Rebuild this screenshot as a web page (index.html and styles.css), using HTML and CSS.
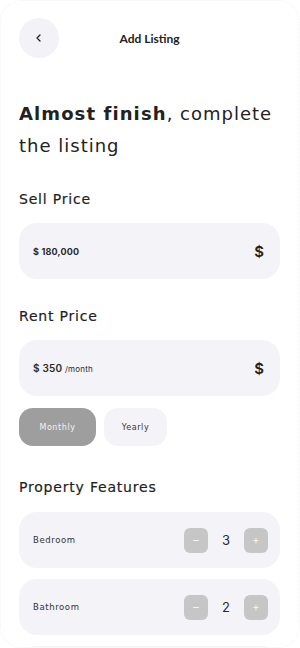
FILE: index.html
```html
<!DOCTYPE html>
<html lang="en">
<head>
<meta charset="utf-8">
<title>Add Listing</title>
<link rel="stylesheet" href="styles.css">
</head>
<body>
<div class="frame">
  <header class="topbar">
    <button class="back" aria-label="Back">
      <svg width="10" height="10" viewBox="0 0 10 10"><path d="M6 2 L3 5 L6 8" fill="none" stroke="#222" stroke-width="1.3" stroke-linecap="round" stroke-linejoin="round"/></svg>
    </button>
    <h1 class="title">Add Listing</h1>
    <span class="spacer"></span>
  </header>

  <h2 class="headline"><strong>Almost finish</strong>, complete the listing</h2>

  <h3 class="label label-first">Sell Price</h3>
  <div class="field">
    <span class="value">$ 180,000</span>
    <span class="cur">$</span>
  </div>

  <h3 class="label">Rent Price</h3>
  <div class="field">
    <span class="value value-rent">$ 350 <small>/month</small></span>
    <span class="cur">$</span>
  </div>

  <div class="toggles">
    <button class="pill pill-active">Monthly</button>
    <button class="pill">Yearly</button>
  </div>

  <h3 class="label label-features">Property Features</h3>
  <div class="rows">
    <div class="row">
      <span class="row-name">Bedroom</span>
      <div class="stepper">
        <span class="step">&minus;</span>
        <span class="count">3</span>
        <span class="step step-plus">+</span>
      </div>
    </div>
    <div class="row">
      <span class="row-name">Bathroom</span>
      <div class="stepper">
        <span class="step">&minus;</span>
        <span class="count">2</span>
        <span class="step step-plus">+</span>
      </div>
    </div>
    <div class="row row-next" aria-hidden="true"></div>
  </div>
</div>
</body>
</html>
```

FILE: styles.css
```css
* { box-sizing: border-box; }

html, body {
  margin: 0;
  padding: 0;
  background: #ffffff;
}

body {
  font-family: Inter, "Liberation Sans", sans-serif;
  color: #222222;
}

.frame {
  height: 648px;
  overflow: hidden;
  border: 1px dotted #f2f2f2;
  border-radius: 22px;
  padding: 17px 19px 0 18px;
}

.topbar {
  display: grid;
  grid-template-columns: 40px 1fr 40px;
  align-items: center;
  height: 40px;
}

.back {
  width: 40px;
  height: 40px;
  border: none;
  border-radius: 50%;
  background: #f3f2f7;
  display: flex;
  align-items: center;
  justify-content: center;
  padding: 0;
}

.back svg { display: block; }

.title {
  margin: 0;
  text-align: center;
  font-family: Lato, "Liberation Sans", sans-serif;
  font-weight: 700;
  font-size: 12px;
  color: #222;
}

.headline {
  margin: 40px 0 0;
  font-family: "DejaVu Sans", Inter, sans-serif;
  font-size: 18px;
  line-height: 32px;
  font-weight: 400;
  color: #222;
  letter-spacing: 1px;
}

.headline strong { font-weight: 700; letter-spacing: 1.1px; }

.label {
  margin: 27px 0 0;
  font-family: "DejaVu Sans", Inter, sans-serif;
  font-size: 14px;
  line-height: 20px;
  font-weight: 400;
  color: #1f1f1f;
  letter-spacing: 0.8px;
  -webkit-text-stroke: 0.2px #1f1f1f;
}

.label-features { margin-top: 31px; }

.field {
  margin-top: 14px;
  height: 56px;
  border-radius: 18px;
  background: #f4f3f8;
  display: flex;
  align-items: center;
  justify-content: space-between;
  padding: 0 16px 0 14px;
}

.value {
  font-size: 9px;
  font-weight: 700;
  color: #2a2a2a;
  letter-spacing: 0.2px;
}

.value-rent {
  font-size: 10px;
  font-weight: 600;
}

.value-rent small {
  font-size: 8px;
  font-weight: 400;
}

.cur {
  font-size: 15px;
  font-weight: 600;
  color: #222;
}

.toggles {
  margin-top: 12px;
  display: flex;
  gap: 8px;
}

.pill {
  height: 38px;
  border: none;
  border-radius: 14px;
  background: #f4f3f8;
  font-family: "DejaVu Sans", Inter, sans-serif;
  font-size: 8px;
  color: #333;
  width: 63px;
  padding: 0;
  letter-spacing: 0.6px;
}

.pill-active {
  width: 77px;
  background: #9e9e9e;
  color: #f2f2f2;
}

.rows {
  margin-top: 15px;
  display: flex;
  flex-direction: column;
  gap: 11px;
}

.row {
  height: 56px;
  border-radius: 18px;
  background: #f4f3f8;
  display: flex;
  align-items: center;
  justify-content: space-between;
  padding: 0 12px 0 14px;
  flex-shrink: 0;
}

.row-name {
  font-family: "DejaVu Sans", Inter, sans-serif;
  font-size: 8.5px;
  color: #333;
  letter-spacing: 0.6px;
}

.stepper {
  display: flex;
  align-items: center;
}

.step {
  width: 24px;
  height: 25px;
  border-radius: 6px;
  background: #c6c6c6;
  color: #f4f4f4;
  display: flex;
  align-items: center;
  justify-content: center;
  font-size: 12px;
  line-height: 1;
}

.step-plus { font-size: 11px; }

.count {
  width: 36px;
  text-align: center;
  font-size: 13px;
  color: #2a2a2a;
}
```
